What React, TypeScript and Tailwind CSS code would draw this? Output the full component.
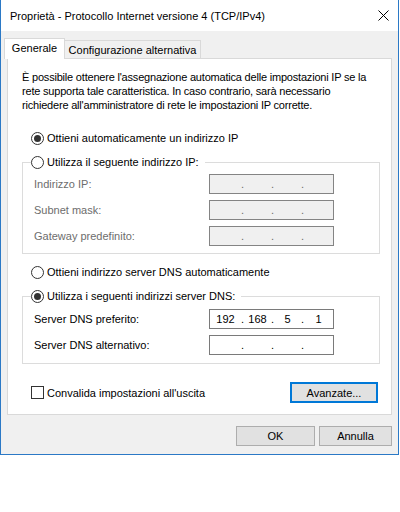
import React from "react"

const FONT = "font-['Liberation_Sans',Arial,sans-serif]"

function Radio({ checked }: { checked?: boolean }) {
  return (
    <span className="w-[13px] h-[13px] rounded-full border border-[#333333] bg-white flex items-center justify-center shrink-0">
      {checked && <span className="w-[7px] h-[7px] rounded-full bg-[#333333]" />}
    </span>
  )
}

function IpBox({ value, disabled }: { value?: string[]; disabled?: boolean }) {
  const v = value || ["", "", "", ""]
  return (
    <div
      className={
        "w-[125px] h-[20px] border flex items-center " +
        (disabled ? "bg-[#f0f0f0] border-[#848484] text-[#6d6d6d]" : "bg-white border-[#7a7a7a] text-black")
      }
    >
      <span className="w-[31px] text-center">{v[0]}</span>
      <span className="w-[3px] text-center">.</span>
      <span className="w-[27px] text-center">{v[1]}</span>
      <span className="w-[3px] text-center">.</span>
      <span className="w-[27px] text-center">{v[2]}</span>
      <span className="w-[3px] text-center">.</span>
      <span className="flex-1 text-center">{v[3]}</span>
    </div>
  )
}

function Row({ label, disabled, value }: { label: string; disabled?: boolean; value?: string[] }) {
  return (
    <div className="flex items-center pl-[11px]">
      <span className={"w-[175px] " + (disabled ? "text-[#6d6d6d]" : "text-black")}>{label}</span>
      <IpBox disabled={disabled} value={value} />
    </div>
  )
}

export default function App() {
  return (
    <div className={"w-[400px] h-[512px] bg-white text-[11px] leading-[14px] text-black " + FONT}>
      <div className="w-[399px] h-[455px] border-x border-b border-[#2b79c6] bg-[#f0f0f0] flex flex-col">
        {/* title bar */}
        <div className="h-[31px] bg-white flex items-center justify-between pl-[9px] pr-[9px] shrink-0">
          <span className="text-[11px]">Proprietà - Protocollo Internet versione 4 (TCP/IPv4)</span>
          <svg width="11" height="11" viewBox="0 0 11 11">
            <path d="M0.5 0.5 L10.5 10.5 M10.5 0.5 L0.5 10.5" stroke="#000" strokeWidth="1" />
          </svg>
        </div>

        <div className="px-[6px] pt-[7px] flex flex-col">
          {/* tabs */}
          <div className="flex items-end h-[20px]">
            <div className="-ml-[3px] w-[61px] h-[21px] bg-white border-x border-t border-[#d9d9d9] relative z-10 -mb-[1px] flex items-center justify-center pb-[2px]">
              Generale
            </div>
            <div className="w-[136px] h-[18px] border-r border-t border-[#d9d9d9] flex items-center justify-center">
              Configurazione alternativa
            </div>
          </div>

          {/* panel */}
          <div className="h-[357px] bg-white border border-[#d9d9d9] pl-[14px] pr-[11px] pt-[11px] flex flex-col">
            <p className="whitespace-nowrap tracking-[-0.2px]">
              È possibile ottenere l'assegnazione automatica delle impostazioni IP se la
              <br />
              rete supporta tale caratteristica. In caso contrario, sarà necessario
              <br />
              richiedere all'amministratore di rete le impostazioni IP corrette.
            </p>

            <label className="mt-[19px] h-[14px] flex items-center gap-[3px] pl-[9px]">
              <Radio checked />
              <span>Ottieni automaticamente un indirizzo IP</span>
            </label>

            <fieldset className="mt-[10px] border border-[#dcdcdc] pt-[5px] pb-[7px] flex flex-col gap-[6px]">
              <legend className="ml-[8px] pr-[6px] h-[14px] flex items-center gap-[3px]">
                <Radio />
                <span>Utilizza il seguente indirizzo IP:</span>
              </legend>
              <Row label="Indirizzo IP:" disabled />
              <Row label="Subnet mask:" disabled />
              <Row label="Gateway predefinito:" disabled />
            </fieldset>

            <label className="mt-[11px] h-[14px] flex items-center gap-[3px] pl-[9px]">
              <Radio />
              <span>Ottieni indirizzo server DNS automaticamente</span>
            </label>

            <fieldset className="mt-[10px] border border-[#dcdcdc] pt-[6px] pb-[8px] flex flex-col gap-[6px]">
              <legend className="ml-[8px] pr-[6px] h-[14px] flex items-center gap-[3px]">
                <Radio checked />
                <span>Utilizza i seguenti indirizzi server DNS:</span>
              </legend>
              <Row label="Server DNS preferito:" value={["192", "168", "5", "1"]} />
              <Row label="Server DNS alternativo:" />
            </fieldset>

            <div className="mt-[18px] h-[21px] flex items-center justify-between pl-[9px] pr-[2px]">
              <label className="flex items-center gap-[3px]">
                <span className="w-[13px] h-[13px] border border-[#333333] bg-white shrink-0" />
                <span>Convalida impostazioni all'uscita</span>
              </label>
              <button className="w-[88px] h-[21px] border-2 border-[#0078d7] bg-[#e1e1e1] flex items-center justify-center">
                Avanzate...
              </button>
            </div>
          </div>

          {/* footer buttons */}
          <div className="mt-[11px] flex justify-end gap-[4px]">
            <button className="w-[79px] h-[20px] border border-[#adadad] bg-[#e1e1e1] flex items-center justify-center">
              OK
            </button>
            <button className="w-[73px] h-[20px] border border-[#adadad] bg-[#e1e1e1] flex items-center justify-center">
              Annulla
            </button>
          </div>
        </div>
      </div>
    </div>
  )
}
